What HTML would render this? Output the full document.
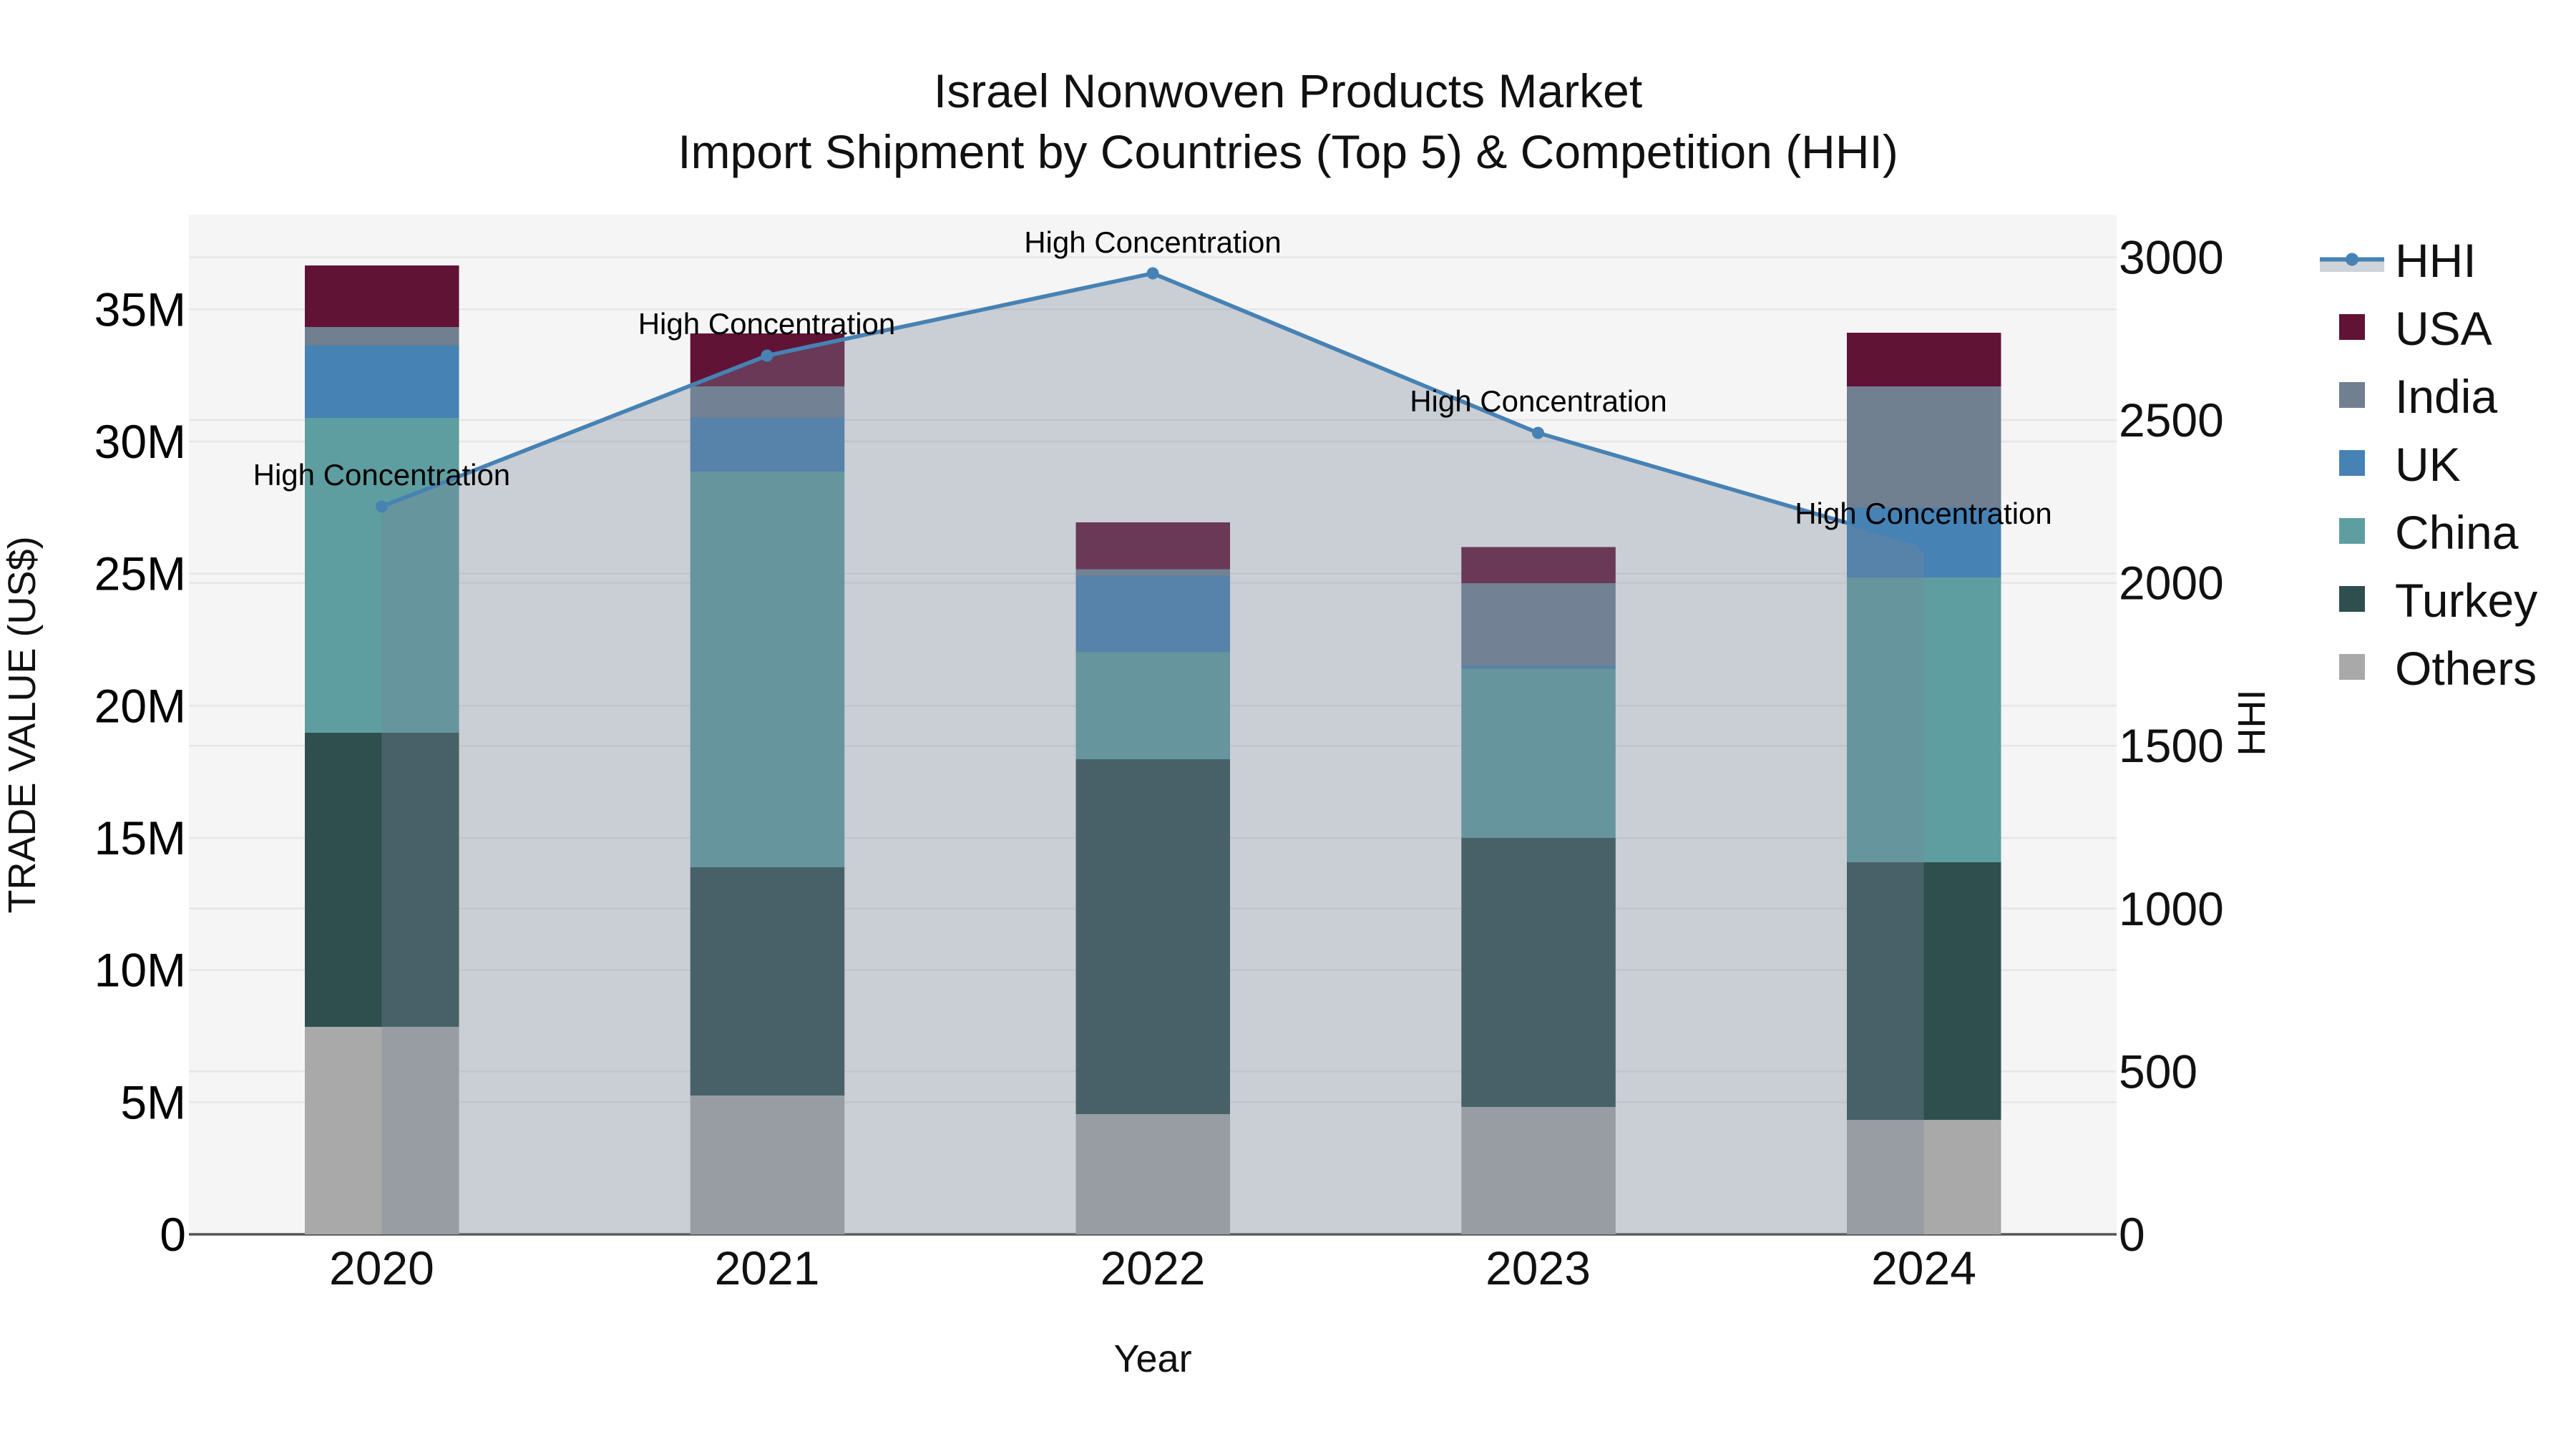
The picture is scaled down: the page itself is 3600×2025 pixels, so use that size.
<!DOCTYPE html>
<html><head><meta charset="utf-8"><style>
html,body{margin:0;padding:0;background:#fff}
svg{display:block}
text{font-family:"Liberation Sans",sans-serif}
.t{font-size:66px;fill:#111}
.l{font-size:66px;fill:#000}
.a{font-size:42px;fill:#000;text-anchor:middle}
.ti{font-size:66px;fill:#111;text-anchor:middle}
.at{font-size:54px;fill:#111;text-anchor:middle}
</style></head><body>
<svg xmlns="http://www.w3.org/2000/svg" width="3600" height="2025" viewBox="0 0 3600 2025">
<rect width="3600" height="2025" fill="#fff"/>
<rect x="264" y="300" width="2694" height="1425" fill="#f5f5f5"/>
<g stroke="#e6e6e6" stroke-width="2.5">
<path d="M264 1540.3H2958M264 1355.7H2958M264 1171H2958M264 986.3H2958M264 801.7H2958M264 617H2958M264 432.3H2958"/>
<path d="M264 1497.4H2958M264 1269.8H2958M264 1042.2H2958M264 814.6H2958M264 587H2958M264 359.5H2958"/>
</g>
<path d="M264 1725H2958" stroke="#555" stroke-width="3.5"/>
<g>
<rect x="426" y="371" width="215.5" height="86" fill="#611336"/>
<rect x="426" y="457" width="215.5" height="26" fill="#708090"/>
<rect x="426" y="483" width="215.5" height="101" fill="#4682b4"/>
<rect x="426" y="584" width="215.5" height="440" fill="#5f9ea0"/>
<rect x="426" y="1024" width="215.5" height="411" fill="#2f4f4f"/>
<rect x="426" y="1435" width="215.5" height="290" fill="#a9a9a9"/>

<rect x="964.7" y="466" width="215.5" height="74" fill="#611336"/>
<rect x="964.7" y="540" width="215.5" height="43.5" fill="#708090"/>
<rect x="964.7" y="583.5" width="215.5" height="75.5" fill="#4682b4"/>
<rect x="964.7" y="659" width="215.5" height="553" fill="#5f9ea0"/>
<rect x="964.7" y="1212" width="215.5" height="319" fill="#2f4f4f"/>
<rect x="964.7" y="1531" width="215.5" height="194" fill="#a9a9a9"/>

<rect x="1503.5" y="730" width="215.5" height="65.5" fill="#611336"/>
<rect x="1503.5" y="795.5" width="215.5" height="9.5" fill="#708090"/>
<rect x="1503.5" y="805" width="215.5" height="106.5" fill="#4682b4"/>
<rect x="1503.5" y="911.5" width="215.5" height="149.5" fill="#5f9ea0"/>
<rect x="1503.5" y="1061" width="215.5" height="496" fill="#2f4f4f"/>
<rect x="1503.5" y="1557" width="215.5" height="168" fill="#a9a9a9"/>

<rect x="2042.3" y="764.5" width="215.5" height="50.5" fill="#611336"/>
<rect x="2042.3" y="815" width="215.5" height="115" fill="#708090"/>
<rect x="2042.3" y="930" width="215.5" height="4.5" fill="#4682b4"/>
<rect x="2042.3" y="934.5" width="215.5" height="236.5" fill="#5f9ea0"/>
<rect x="2042.3" y="1171" width="215.5" height="376" fill="#2f4f4f"/>
<rect x="2042.3" y="1547" width="215.5" height="178" fill="#a9a9a9"/>

<rect x="2581" y="465" width="215.5" height="75" fill="#611336"/>
<rect x="2581" y="540" width="215.5" height="169" fill="#708090"/>
<rect x="2581" y="709" width="215.5" height="98" fill="#4682b4"/>
<rect x="2581" y="807" width="215.5" height="398" fill="#5f9ea0"/>
<rect x="2581" y="1205" width="215.5" height="360" fill="#2f4f4f"/>
<rect x="2581" y="1565" width="215.5" height="160" fill="#a9a9a9"/>
</g>
<path d="M533.4 1725V708L1072 497L1611 382L2149.5 605L2688.5 762V1725Z" fill="rgb(121,133,153)" fill-opacity=".34"/>
<path d="M533.4 708L1072 497L1611 382L2149.5 605L2688.5 762" fill="none" stroke="#4682b4" stroke-width="5.6"/>
<g fill="#4682b4"><circle cx="533.4" cy="708" r="8.5"/><circle cx="1072" cy="497" r="8.5"/><circle cx="1611" cy="382" r="8.5"/><circle cx="2149.5" cy="605" r="8.5"/><circle cx="2688.5" cy="762" r="8.5"/></g>

<text class="ti" x="1800" y="150">Israel Nonwoven Products Market</text>
<text class="ti" x="1800" y="235">Import Shipment by Countries (Top 5) &amp; Competition (HHI)</text>

<g>
<text class="l" text-anchor="end" x="260" y="1748">0</text>
<text class="l" text-anchor="end" x="260" y="1563.3">5M</text>
<text class="l" text-anchor="end" x="260" y="1378.7">10M</text>
<text class="l" text-anchor="end" x="260" y="1194">15M</text>
<text class="l" text-anchor="end" x="260" y="1009.3">20M</text>
<text class="l" text-anchor="end" x="260" y="824.7">25M</text>
<text class="l" text-anchor="end" x="260" y="640">30M</text>
<text class="l" text-anchor="end" x="260" y="455.3">35M</text>
</g>
<g>
<text class="t" x="2961" y="1748">0</text>
<text class="t" x="2961" y="1520.4">500</text>
<text class="t" x="2961" y="1292.8">1000</text>
<text class="t" x="2961" y="1065.2">1500</text>
<text class="t" x="2961" y="837.6">2000</text>
<text class="t" x="2961" y="610">2500</text>
<text class="t" x="2961" y="382.5">3000</text>
</g>
<g text-anchor="middle">
<text class="t" x="533.4" y="1795">2020</text>
<text class="t" x="1072" y="1795">2021</text>
<text class="t" x="1611" y="1795">2022</text>
<text class="t" x="2149.5" y="1795">2023</text>
<text class="t" x="2688.5" y="1795">2024</text>
</g>
<text class="at" x="1611" y="1917">Year</text>
<text class="at" transform="translate(49,1013) rotate(-90)">TRADE VALUE (US$)</text>
<text class="at" transform="translate(3165,1010) rotate(-90)">HHI</text>

<text class="a" x="533.4" y="678">High Concentration</text>
<text class="a" x="1071.5" y="467">High Concentration</text>
<text class="a" x="1611" y="353">High Concentration</text>
<text class="a" x="2150" y="575">High Concentration</text>
<text class="a" x="2688" y="732">High Concentration</text>

<rect x="3242" y="362" width="90" height="18" fill="#cfd3da"/>
<path d="M3242 362.5H3332" stroke="#4682b4" stroke-width="6"/>
<circle cx="3287" cy="362.5" r="9" fill="#4682b4"/>
<rect x="3269" y="439" width="36" height="36" fill="#611336"/>
<rect x="3269" y="534" width="36" height="36" fill="#708090"/>
<rect x="3269" y="629" width="36" height="36" fill="#4682b4"/>
<rect x="3269" y="724" width="36" height="36" fill="#5f9ea0"/>
<rect x="3269" y="819" width="36" height="36" fill="#2f4f4f"/>
<rect x="3269" y="914" width="36" height="36" fill="#a9a9a9"/>
<g>
<text class="t" x="3347" y="387">HHI</text>
<text class="t" x="3347" y="482">USA</text>
<text class="t" x="3347" y="577">India</text>
<text class="t" x="3347" y="672">UK</text>
<text class="t" x="3347" y="767">China</text>
<text class="t" x="3347" y="862">Turkey</text>
<text class="t" x="3347" y="957">Others</text>
</g>
</svg>
</body></html>
